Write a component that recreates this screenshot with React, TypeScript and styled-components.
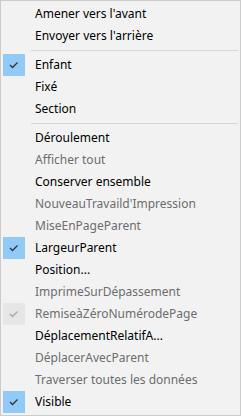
import React from "react";
import styled, { createGlobalStyle } from "styled-components";

const GlobalStyle = createGlobalStyle`
  html, body {
    margin: 0;
    padding: 0;
    background: #ffffff;
  }
  * {
    box-sizing: border-box;
  }
`;

type Entry =
  | { kind: "sep" }
  | { kind: "item"; label: string; disabled?: boolean; checked?: boolean };

const entries: Entry[] = [
  { kind: "item", label: "Amener vers l'avant" },
  { kind: "item", label: "Envoyer vers l'arrière" },
  { kind: "sep" },
  { kind: "item", label: "Enfant", checked: true },
  { kind: "item", label: "Fixé" },
  { kind: "item", label: "Section" },
  { kind: "sep" },
  { kind: "item", label: "Déroulement" },
  { kind: "item", label: "Afficher tout", disabled: true },
  { kind: "item", label: "Conserver ensemble" },
  { kind: "item", label: "NouveauTravaild'Impression", disabled: true },
  { kind: "item", label: "MiseEnPageParent", disabled: true },
  { kind: "item", label: "LargeurParent", checked: true },
  { kind: "item", label: "Position..." },
  { kind: "item", label: "ImprimeSurDépassement", disabled: true },
  { kind: "item", label: "RemiseàZéroNumérodePage", disabled: true, checked: true },
  { kind: "item", label: "DéplacementRelatifA..." },
  { kind: "item", label: "DéplacerAvecParent", disabled: true },
  { kind: "item", label: "Traverser toutes les données", disabled: true },
  { kind: "item", label: "Visible", checked: true },
];

const Menu = styled.div`
  width: 241px;
  height: 416px;
  border: 1px solid #cccccc;
  background: #f2f2f2;
  padding: 2px;
  display: flex;
  flex-direction: column;
  font-family: "Noto Sans", "Open Sans", sans-serif;
  font-size: 12px;
  user-select: none;
`;

const Item = styled.div<{ $disabled?: boolean }>`
  height: 22px;
  display: flex;
  align-items: center;
  color: ${(p) => (p.$disabled ? "#6d6d6d" : "#000000")};
`;

const CheckCell = styled.div<{ $checked?: boolean; $disabled?: boolean }>`
  width: 22px;
  height: 22px;
  flex: 0 0 22px;
  display: flex;
  align-items: center;
  justify-content: center;
  background: ${(p) =>
    !p.$checked ? "transparent" : p.$disabled ? "#e6e6e6" : "#91c9f7"};
  color: ${(p) => (p.$disabled ? "#a6a6a6" : "#333333")};
`;

const Label = styled.span`
  margin-left: 10px;
  white-space: nowrap;
  line-height: 22px;
`;

const Separator = styled.div`
  height: 7px;
  display: flex;
  align-items: center;
  padding-left: 28px;
  &::after {
    content: "";
    flex: 1;
    height: 1px;
    background: #d7d7d7;
  }
`;

const CheckMark = () => (
  <svg width="22" height="22" viewBox="0 0 22 22">
    <polyline
      points="7,11 9.5,13.5 14.5,8.5"
      fill="none"
      stroke="currentColor"
      strokeWidth="1.3"
    />
  </svg>
);

export default function App() {
  return (
    <>
      <GlobalStyle />
      <Menu>
        {entries.map((e, i) =>
          e.kind === "sep" ? (
            <Separator key={i} />
          ) : (
            <Item key={i} $disabled={e.disabled}>
              <CheckCell $checked={e.checked} $disabled={e.disabled}>
                {e.checked && <CheckMark />}
              </CheckCell>
              <Label>{e.label}</Label>
            </Item>
          )
        )}
      </Menu>
    </>
  );
}
